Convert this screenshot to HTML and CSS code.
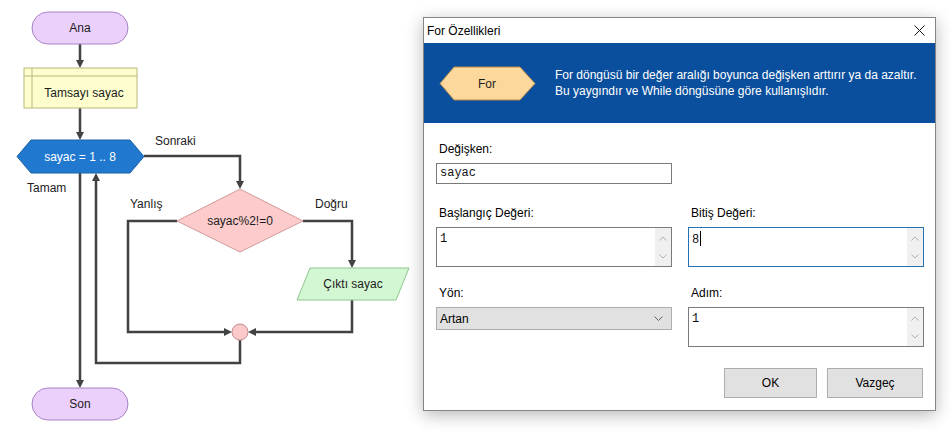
FILE: index.html
```html
<!DOCTYPE html>
<html lang="tr">
<head>
    <meta charset="UTF-8">
    <meta name="viewport" content="width=device-width, initial-scale=1.0">
    <title>For Özellikleri</title>
    <link rel="stylesheet" href="styles.css">
</head>
<body>
    <div class="screen">
        <!-- flowchart canvas -->
        <svg class="chart" width="423" height="435" viewBox="0 0 423 435">
            <g class="wire">
                <polyline points="80,44 80,61"/>
                <polyline points="80,108 80,133"/>
                <polyline points="144,156 240,156 240,182"/>
                <polyline points="80,173 80,381"/>
                <polyline points="177,221 128,221 128,332 225,332"/>
                <polyline points="303,221 352,221 352,261"/>
                <polyline points="352,300 352,332 255,332"/>
                <polyline points="240,340 240,363 96,363 96,180"/>
            </g>
            <g class="head">
                <polygon points="76,60 84,60 80,68"/>
                <polygon points="76,132 84,132 80,140"/>
                <polygon points="236,181 244,181 240,189"/>
                <polygon points="76,380 84,380 80,388"/>
                <polygon points="224,328 224,336 232,332"/>
                <polygon points="348,260 356,260 352,268"/>
                <polygon points="256,328 256,336 248,332"/>
                <polygon points="92,181 100,181 96,173"/>
            </g>

            <rect class="terminal" x="32" y="12" width="96" height="32" rx="16"/>
            <text class="lbl" x="80" y="28">Ana</text>

            <rect class="decl" x="24" y="68" width="113" height="40"/>
            <line class="decl-line" x1="24" y1="76" x2="137" y2="76"/>
            <line class="decl-line" x1="32" y1="68" x2="32" y2="108"/>
            <text class="lbl" x="84" y="93">Tamsayı sayac</text>

            <polygon class="loop" points="17,156.5 31,140 130,140 144,156.5 130,173 31,173"/>
            <text class="lbl white" x="80" y="157">sayac = 1 .. 8</text>

            <polygon class="cond" points="177,221 240,189 303,221 240,252"/>
            <text class="lbl" x="240" y="221">sayac%2!=0</text>

            <polygon class="output" points="310,268 409,268 396,300 297,300"/>
            <text class="lbl" x="353" y="284">Çıktı sayac</text>

            <circle class="join" cx="240" cy="332" r="8"/>

            <rect class="terminal" x="32" y="388" width="96" height="32" rx="16"/>
            <text class="lbl" x="80" y="404">Son</text>

            <text class="note" x="155" y="141">Sonraki</text>
            <text class="note" x="27" y="188">Tamam</text>
            <text class="note" x="130" y="204">Yanlış</text>
            <text class="note" x="315" y="204">Doğru</text>
        </svg>

        <div class="dialog">
            <div class="titlebar">
                <span>For Özellikleri</span>
                <svg class="close" width="11" height="11" viewBox="0 0 11 11">
                    <path d="M0.5 0.5 L10.5 10.5 M10.5 0.5 L0.5 10.5"/>
                </svg>
            </div>

            <div class="banner">
                <svg class="badge" width="97" height="35" viewBox="0 0 97 35">
                    <polygon points="1,17.5 15,1 81,1 96,17.5 81,34 15,34"/>
                    <text x="48" y="18">For</text>
                </svg>
                <p>For döngüsü bir değer aralığı boyunca değişken arttırır ya da azaltır.<br>
                   Bu yaygındır ve While döngüsüne göre kullanışlıdır.</p>
            </div>

            <div class="body">
                <div class="row">
                    <div class="field">
                        <label>Değişken:</label>
                        <div class="textbox single">sayac</div>
                    </div>
                </div>

                <div class="row row-start">
                    <div class="field">
                        <label>Başlangıç Değeri:</label>
                        <div class="textbox multi">
                            <span class="val">1</span>
                            <div class="scrollbar">
                                <svg width="8" height="5" viewBox="0 0 8 5"><path d="M0.5 4.5 L4 1 L7.5 4.5"/></svg>
                                <svg width="8" height="5" viewBox="0 0 8 5"><path d="M0.5 0.5 L4 4 L7.5 0.5"/></svg>
                            </div>
                        </div>
                    </div>
                    <div class="field">
                        <label>Bitiş Değeri:</label>
                        <div class="textbox multi focus">
                            <span class="val">8<i class="caret"></i></span>
                            <div class="scrollbar">
                                <svg width="8" height="5" viewBox="0 0 8 5"><path d="M0.5 4.5 L4 1 L7.5 4.5"/></svg>
                                <svg width="8" height="5" viewBox="0 0 8 5"><path d="M0.5 0.5 L4 4 L7.5 0.5"/></svg>
                            </div>
                        </div>
                    </div>
                </div>

                <div class="row row-dir">
                    <div class="field">
                        <label>Yön:</label>
                        <div class="combo">
                            <span>Artan</span>
                            <svg width="9" height="6" viewBox="0 0 9 6"><path d="M0.5 0.5 L4.5 4.5 L8.5 0.5"/></svg>
                        </div>
                    </div>
                    <div class="field">
                        <label>Adım:</label>
                        <div class="textbox multi">
                            <span class="val">1</span>
                            <div class="scrollbar">
                                <svg width="8" height="5" viewBox="0 0 8 5"><path d="M0.5 4.5 L4 1 L7.5 4.5"/></svg>
                                <svg width="8" height="5" viewBox="0 0 8 5"><path d="M0.5 0.5 L4 4 L7.5 0.5"/></svg>
                            </div>
                        </div>
                    </div>
                </div>

                <div class="buttons">
                    <button class="btn ok">OK</button>
                    <button class="btn cancel">Vazgeç</button>
                </div>
            </div>
        </div>
    </div>
</body>
</html>
```

FILE: styles.css
```css
body {
    margin: 0;
    background-color: #fff;
    font-family: "Liberation Sans", Arial, sans-serif;
    font-size: 12px;
    color: #000;
}

.screen {
    display: flex;
    align-items: flex-start;
    width: 951px;
    height: 435px;
    overflow: hidden;
}

/* flowchart */
.chart {
    flex: none;
    display: block;
}

.wire polyline {
    fill: none;
    stroke: #424242;
    stroke-width: 2.5;
}

.head polygon {
    fill: #424242;
}

.terminal {
    fill: #ebd0fb;
    stroke: #a883c4;
}

.decl {
    fill: #fdfdcd;
    stroke: #bcb87c;
}

.decl-line {
    stroke: #bcb87c;
}

.loop {
    fill: #2179cf;
    stroke: #1b62a6;
}

.cond {
    fill: #fdcbcb;
    stroke: #cf9b9b;
}

.output {
    fill: #d3f6d3;
    stroke: #8fc78f;
}

.join {
    fill: #fcc9c9;
    stroke: #c28c8c;
}

.lbl {
    font-size: 12px;
    fill: #1c1c1c;
    text-anchor: middle;
    dominant-baseline: central;
}

.lbl.white {
    fill: #fff;
}

.note {
    font-size: 12px;
    fill: #1c1c1c;
    dominant-baseline: central;
}

/* dialog window */
.dialog {
    flex: none;
    box-sizing: border-box;
    width: 513px;
    margin-top: 17px;
    border: 1px solid #858585;
    background-color: #fff;
    box-shadow: 0 4px 16px rgba(0, 0, 0, 0.28);
}

.titlebar {
    display: flex;
    justify-content: space-between;
    align-items: center;
    height: 25px;
    padding: 0 10px 0 3px;
}

.close path {
    stroke: #111;
    stroke-width: 1;
    fill: none;
}

.banner {
    display: flex;
    align-items: center;
    height: 80px;
    padding-left: 15px;
    background-color: #0a4f9d;
}

.badge {
    flex: none;
}

.badge polygon {
    fill: #fcd89c;
    stroke: #b3894c;
}

.badge text {
    font-size: 12px;
    fill: #1c1c1c;
    text-anchor: middle;
    dominant-baseline: central;
}

.banner p {
    margin: 0 0 0 19px;
    color: #fff;
    line-height: 16px;
}

.body {
    padding: 18px 11px 12px 12px;
}

.row {
    display: grid;
    grid-template-columns: 236px 236px;
    column-gap: 16px;
}

.row-start {
    margin-top: 21px;
}

.row-dir {
    margin-top: 18px;
}

.field label {
    display: block;
    line-height: 16px;
    margin-bottom: 6px;
    padding-left: 3px;
}

.textbox {
    box-sizing: border-box;
    border: 1px solid #7a7a7a;
    font-family: "Liberation Mono", "Courier New", monospace;
    font-size: 12px;
    color: #111;
}

.textbox.single {
    height: 21px;
    line-height: 19px;
    padding-left: 3px;
}

.textbox.multi {
    display: flex;
    justify-content: space-between;
    height: 40px;
}

.textbox.focus {
    border-color: #2470b0;
}

.val {
    padding: 3px 0 0 3px;
    line-height: 16px;
}

.caret {
    display: inline-block;
    width: 1px;
    height: 15px;
    margin-left: 1px;
    vertical-align: -3px;
    background-color: #000;
}

.scrollbar {
    display: flex;
    flex-direction: column;
    justify-content: space-between;
    align-items: center;
    width: 16px;
    padding: 8px 0 7px;
    background-color: #f0f0f0;
}

.scrollbar svg path,
.combo svg path {
    fill: none;
    stroke: #b0b0b0;
    stroke-width: 1;
}

.combo {
    box-sizing: border-box;
    display: flex;
    justify-content: space-between;
    align-items: center;
    height: 23px;
    padding: 0 8px 0 3px;
    border: 1px solid #adadad;
    background-color: #e1e1e1;
}

.combo svg path {
    stroke: #606060;
}

.buttons {
    display: flex;
    justify-content: flex-end;
    gap: 10px;
    margin-top: 21px;
    padding-right: 1px;
}

.btn {
    height: 30px;
    border: 1px solid #adadad;
    background-color: #e1e1e1;
    font-family: inherit;
    font-size: 12px;
    color: #000;
    padding: 0;
}

.btn.ok {
    width: 93px;
}

.btn.cancel {
    width: 96px;
}
```
